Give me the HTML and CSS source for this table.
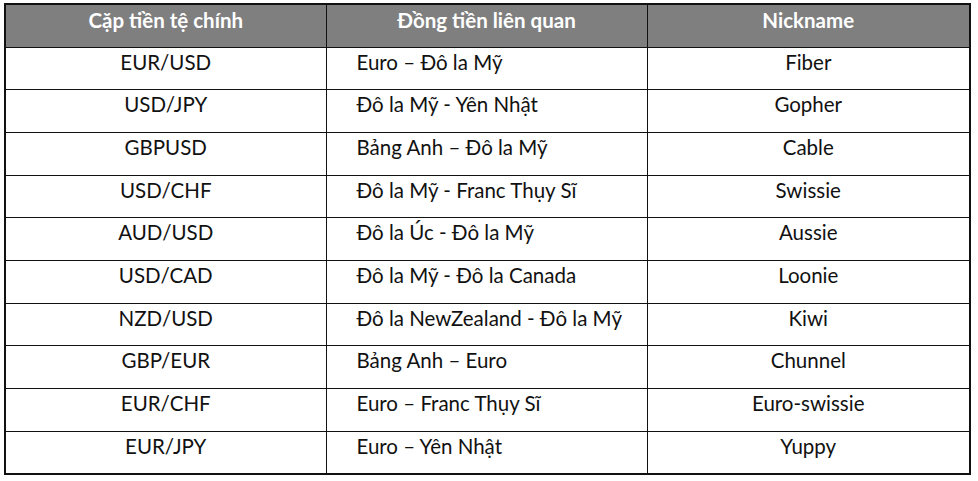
FILE: index.html
```html
<!DOCTYPE html>
<html lang="vi">
<head>
<meta charset="utf-8">
<link rel="stylesheet" href="styles.css">
</head>
<body>
<table class="fx">
  <colgroup>
    <col class="w1">
    <col class="w2">
    <col class="w3">
  </colgroup>
  <thead>
    <tr class="head-row">
      <th>Cặp tiền tệ chính</th>
      <th>Đồng tiền liên quan</th>
      <th>Nickname</th>
    </tr>
  </thead>
  <tbody>
    <tr><td>EUR/USD</td><td class="c2">Euro – Đô la Mỹ</td><td>Fiber</td></tr>
    <tr><td>USD/JPY</td><td class="c2">Đô la Mỹ - Yên Nhật</td><td>Gopher</td></tr>
    <tr><td>GBPUSD</td><td class="c2">Bảng Anh – Đô la Mỹ</td><td>Cable</td></tr>
    <tr><td>USD/CHF</td><td class="c2">Đô la Mỹ - Franc Thụy Sĩ</td><td>Swissie</td></tr>
    <tr><td>AUD/USD</td><td class="c2">Đô la Úc - Đô la Mỹ</td><td>Aussie</td></tr>
    <tr><td>USD/CAD</td><td class="c2">Đô la Mỹ - Đô la Canada</td><td>Loonie</td></tr>
    <tr><td>NZD/USD</td><td class="c2">Đô la NewZealand - Đô la Mỹ</td><td>Kiwi</td></tr>
    <tr><td>GBP/EUR</td><td class="c2">Bảng Anh – Euro</td><td>Chunnel</td></tr>
    <tr><td>EUR/CHF</td><td class="c2">Euro – Franc Thụy Sĩ</td><td>Euro-swissie</td></tr>
    <tr><td>EUR/JPY</td><td class="c2">Euro – Yên Nhật</td><td>Yuppy</td></tr>
  </tbody>
</table>
</body>
</html>
```
FILE: styles.css
```css
html, body {
  margin: 0;
  padding: 0;
  background: #ffffff;
}
body {
  padding: 3px 0 0 4px;
  font-family: "Lato", "Liberation Sans", sans-serif;
  color: #111111;
}
.fx {
  border-collapse: collapse;
  table-layout: fixed;
  width: 965px;
  border: 2px solid #111111;
}
.w1 { width: 321px; }
.w2 { width: 321px; }
.w3 { width: 323px; }
.fx th, .fx td {
  border: 1px solid #111111;
  vertical-align: top;
  padding: 2px 0 0 0;
  font-size: 20.5px;
  line-height: 24px;
  white-space: nowrap;
  overflow: hidden;
  text-align: center;
}
.head-row {
  height: 43px;
  background: #7f7f7f;
}
.fx th {
  color: #ffffff;
  font-weight: 700;
  padding-top: 3px;
}
.fx tbody tr {
  height: 42.7px;
}
.fx td.c2 {
  text-align: left;
  padding-left: 30px;
}
```
